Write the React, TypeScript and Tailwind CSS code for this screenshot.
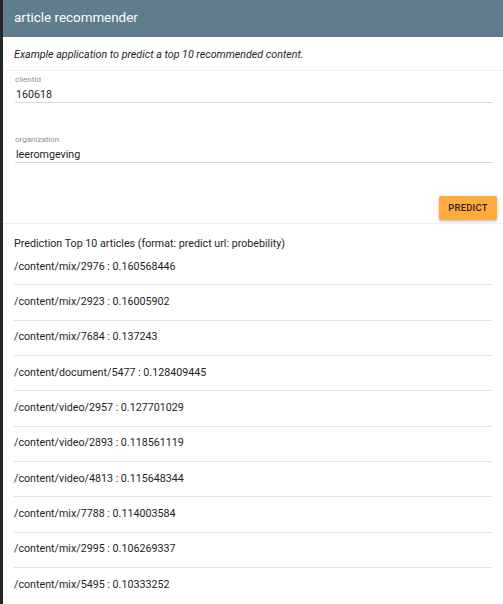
import React from "react";

const items = [
  "/content/mix/2976 : 0.160568446",
  "/content/mix/2923 : 0.16005902",
  "/content/mix/7684 : 0.137243",
  "/content/document/5477 : 0.128409445",
  "/content/video/2957 : 0.127701029",
  "/content/video/2893 : 0.118561119",
  "/content/video/4813 : 0.115648344",
  "/content/mix/7788 : 0.114003584",
  "/content/mix/2995 : 0.106269337",
  "/content/mix/5495 : 0.10333252",
];

function Field({ label, value }: { label: string; value: string }) {
  return (
    <div className="ml-[12px] mr-[10px] flex flex-col">
      <div className="text-[8px] leading-[10px] text-[#8f8f8f]">{label}</div>
      <div className="mt-[2px] h-[16px] text-[10.7px] leading-[15px] text-[#1e1e1e] border-b border-[#d9d9d9] pl-[1px]">
        {value}
      </div>
    </div>
  );
}

export default function App() {
  return (
    <div
      className="flex h-[604px] w-[503px] overflow-hidden bg-white"
      style={{ fontFamily: "Roboto, 'Noto Sans', Arial, sans-serif" }}
    >
      <div className="w-[3px] shrink-0 bg-[#252525]" />
      <div className="flex min-w-0 flex-1 flex-col">
        <div className="flex h-[37px] shrink-0 items-center bg-[#607d8b] pl-[11px] text-[13.4px] text-white">
          article recommender
        </div>
        <div className="h-[33px] shrink-0 pl-[11px] pt-[10px] text-[10.7px] leading-[16px] italic text-[#1e1e1e]">
          Example application to predict a top 10 recommended content.
        </div>
        <div className="h-px shrink-0 bg-[#f0f0f0]" />
        <div className="mt-[4px]">
          <Field label="clientId" value="160618" />
        </div>
        <div className="mt-[32px]">
          <Field label="organization" value="leeromgeving" />
        </div>
        <div className="mt-[33px] flex justify-end pr-[6px]">
          <button className="h-[24px] w-[58px] rounded-[2px] bg-[#ffab40] text-[9.3px] font-medium tracking-[0.3px] text-[#2b2114] shadow-[0_1px_3px_rgba(0,0,0,0.3)]">
            PREDICT
          </button>
        </div>
        <div className="mt-[3px] h-px shrink-0 bg-[#eeeeee]" />
        <div className="mt-[13px] pl-[11px] text-[10.7px] leading-[13px] text-[#1e1e1e]">
          Prediction Top 10 articles (format: predict url: probebility)
        </div>
        <div className="flex flex-col pl-[11px] pr-[11px]">
          {items.map((t, i) => (
            <div
              key={i}
              className={
                "flex h-[35.33px] shrink-0 items-center text-[10.7px] text-[#1e1e1e] " +
                (i < items.length - 1 ? "border-b border-[#e2e2e2]" : "")
              }
            >
              <span className="pb-[1px]">{t}</span>
            </div>
          ))}
        </div>
      </div>
    </div>
  );
}
